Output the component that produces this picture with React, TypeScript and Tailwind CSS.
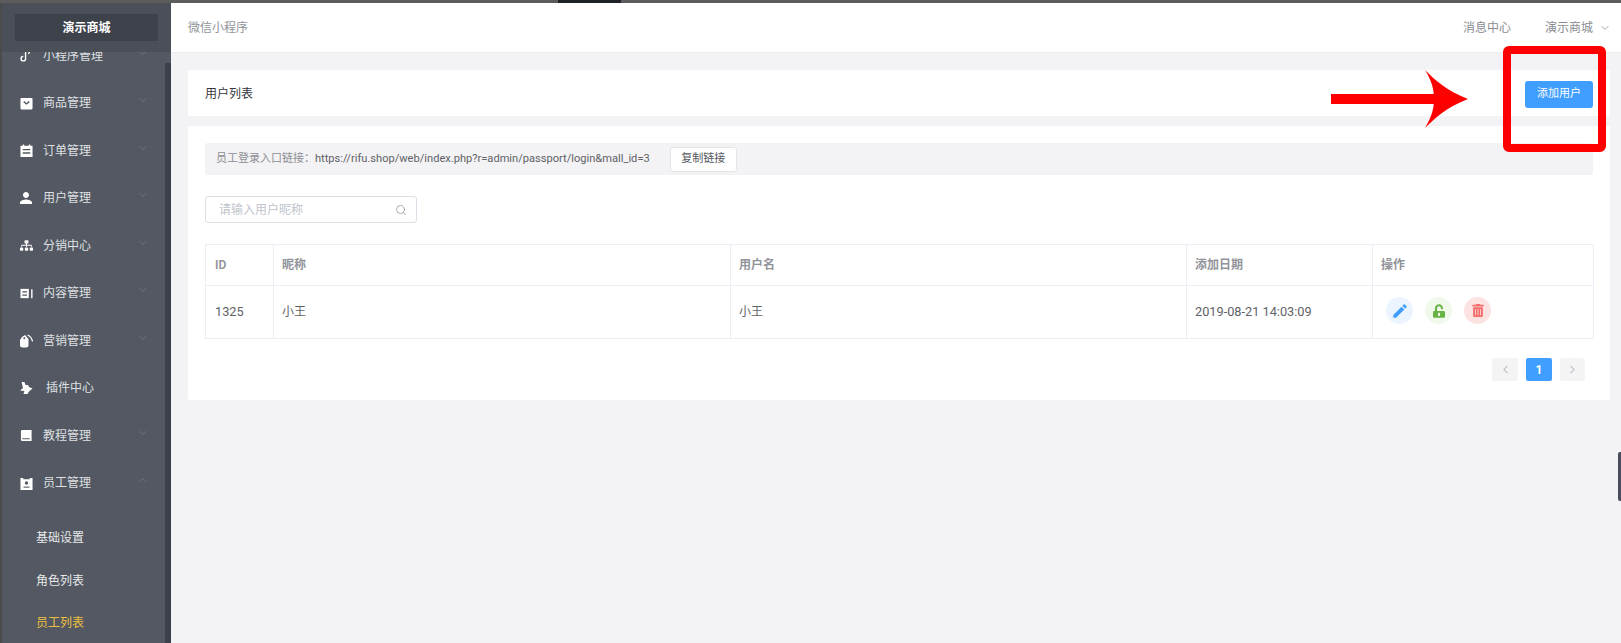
import { ChevronDown, ChevronUp, ChevronLeft, ChevronRight, Search } from 'lucide-react'
import { MdEdit, MdPerson } from 'react-icons/md'
import { FaSitemap, FaTrashAlt, FaUnlockAlt } from 'react-icons/fa'

const font = 'font-["Roboto","Noto_Sans_CJK_SC",sans-serif]'

function MiniIcon() {
  return (
    <svg viewBox="0 0 16 16" className="w-[14px] h-[14px]" fill="none" stroke="#fff" strokeWidth="1.6">
      <path d="M7.5 3v8a2.6 2.6 0 1 1-2.6-2.6" />
      <path d="M12 2.5c0 1.5-.5 2.500-1.500 3" />
    </svg>
  )
}

function BagIcon() {
  return (
    <svg viewBox="0 0 14 14" className="w-[13px] h-[13px]">
      <path fill="#fff" d="M1.500 1h11a1 1 0 0 1 1 1v10a1.500 1.500 0 0 1-1.500 1.500H2A1.500 1.500 0 0 1 .5 12V2a1 1 0 0 1 1-1z" />
      <path fill="none" stroke="#535862" strokeWidth="1.500" d="M4 5l3 2.500L10 5" />
    </svg>
  )
}

function OrderIcon() {
  return (
    <svg viewBox="0 0 14 14" className="w-[13px] h-[13px]">
      <path fill="#fff" d="M.5 2h2.500V.5h1.500V2h5V.5H11V2h2.500v12H.5z" />
      <path stroke="#535862" strokeWidth="1.400" d="M3 6h8M3 9.700h8" />
    </svg>
  )
}

function ContentIcon() {
  return (
    <svg viewBox="0 0 14 14" className="w-[13px] h-[13px]">
      <path fill="#fff" d="M.5 2h9v10h-9z" />
      <path stroke="#535862" strokeWidth="1.300" d="M2.500 5.300h5M2.500 8.700h5" />
      <path fill="#fff" d="M12 2.500h1.500v9.500H12z" />
    </svg>
  )
}

function TagIcon() {
  return (
    <svg viewBox="0 0 14 14" className="w-[14px] h-[14px]">
      <path fill="#fff" d="M3 3 6 1 9.500 5V11a2.500 2.500 0 0 1-2.500 2.500H3.500A2.500 2.500 0 0 1 1 11V6z" />
      <circle cx="5.300" cy="4.300" r="1" fill="#535862" />
      <path fill="none" stroke="#fff" strokeWidth="1.300" d="M8.500 1c2.500 1 4.500 3.500 5 6.500" />
    </svg>
  )
}

function PluginIcon() {
  return (
    <svg viewBox="0 0 14 14" className="w-[14px] h-[14px]">
      <path fill="#fff" d="M2.500 1h3l1 3H9l1 2 3.500 1.500L10 10.500 8.500 13H4.500l1-3-4.500-.5 3-2.500z" />
    </svg>
  )
}

function BookIcon() {
  return (
    <svg viewBox="0 0 14 14" className="w-[13px] h-[13px]">
      <path fill="#fff" d="M2.500 1h10v12h-10A1.500 1.500 0 0 1 1 11.500v-9A1.500 1.500 0 0 1 2.500 1z" />
      <path stroke="#535862" strokeWidth="1.100" d="M2.500 10.500h8" />
    </svg>
  )
}

function StaffIcon() {
  return (
    <svg viewBox="0 0 14 14" className="w-[13px] h-[13px]">
      <path fill="#fff" d="M.5 1h3v1.500h7V1h3v13H.5z" />
      <circle cx="7" cy="6.500" r="1.800" fill="#535862" />
      <path fill="#535862" d="M3.800 10.300h6.400v1.200H3.800z" />
    </svg>
  )
}

const menu = [
  { label: '商品管理', icon: <BagIcon /> },
  { label: '订单管理', icon: <OrderIcon /> },
  { label: '用户管理', icon: <MdPerson className="w-[18px] h-[18px] -mx-0.5 text-white" /> },
  { label: '分销中心', icon: <FaSitemap className="w-[13px] h-[13px] text-white" /> },
  { label: '内容管理', icon: <ContentIcon /> },
  { label: '营销管理', icon: <TagIcon /> },
  { label: '插件中心', icon: <PluginIcon />, plain: true },
  { label: '教程管理', icon: <BookIcon /> },
]

function MenuRow({ label, icon, plain, open }: { label: string; icon: React.ReactNode; plain?: boolean; open?: boolean }) {
  return (
    <div className="h-[47.5px] flex items-center pl-[17px] pr-[16px] text-[12px] text-[#dfe0e2]">
      <span className="w-[14px] flex justify-center shrink-0">{icon}</span>
      <span className={plain ? 'ml-[13px] flex-1' : 'ml-[10px] flex-1'}>{label}</span>
      {plain ? null : open ? (
        <ChevronUp className="w-[12px] h-[12px] text-[#6f747d] -mt-1.5" />
      ) : (
        <ChevronDown className="w-[12px] h-[12px] text-[#6f747d] -mt-1.5" />
      )}
    </div>
  )
}

function Sidebar() {
  return (
    <aside className="w-[171px] shrink-0 h-full overflow-hidden bg-[#535862] border-l-2 border-[#4b4b4b] flex">
      <div className="flex-1 min-w-0 relative">
        {/* logo header lies over the scrolled menu */}
        <div className="absolute top-0 left-0 -right-[6.5px] h-[49px] bg-[#4a4f58] pt-[11px] pl-[13px] pr-[13px] z-10">
          <div className="h-[27px] bg-[#3e424b] flex items-center justify-center text-[12px] font-semibold text-white">
            演示商城
          </div>
        </div>
        <div className="pt-[29px]">
          <MenuRow label="小程序管理" icon={<MiniIcon />} />
          {menu.map((m) => (
            <MenuRow key={m.label} label={m.label} icon={m.icon} plain={m.plain} />
          ))}
          <MenuRow label="员工管理" icon={<StaffIcon />} open />
          <div className="pt-[10px] pl-[34px] text-[12px] text-[#e8e9ea]">
            <div className="h-[42.5px] flex items-center">基础设置</div>
            <div className="h-[42.5px] flex items-center">角色列表</div>
            <div className="h-[42.5px] flex items-center text-[#f0c040]">员工列表</div>
          </div>
        </div>
      </div>
      <div className="w-[6.5px] shrink-0 mt-[60px] bg-[#3d404a]" />
    </aside>
  )
}

function Arrow() {
  return (
    <svg viewBox="0 0 140 60" className="absolute left-[1331px] top-[70px] w-[140px] h-[60px]">
      <path fill="#fe0000" d="M0 24h106V34H0z" />
      <path fill="#fe0000" d="M94 0C104 10 116 21 137 29 116 37 104 48 94 58 101 46 103 38 103 29 103 20 101 11 94 0z" />
    </svg>
  )
}

export default function App() {
  return (
    <div className={`relative w-[1621px] h-[643px] overflow-hidden bg-[#f3f2f5] ${font}`}>
      <div className="h-[3px] bg-[#5c5c5c] flex">
        <div className="w-[63px] ml-[558px] bg-[#1e2226]" />
      </div>
      <div className="flex h-[640px]">
        <Sidebar />
        <main className="flex-1 min-w-0">
          <header className="h-[50px] bg-white border-b border-[#ecebef] flex items-center pl-[17px] pr-[10px] text-[12px] text-[#909399]">
            <span className="flex-1">微信小程序</span>
            <span className="mr-[34px] text-[#8a8c91]">消息中心</span>
            <span className="text-[#8a8c91]">演示商城</span>
            <ChevronDown className="w-[12px] h-[12px] ml-[6px] text-[#a3a6ab]" />
          </header>
          <div className="pt-[17px] pl-[17px] pr-[11px]">
            <div className="h-[46px] pt-[2px] bg-white rounded-[2px] flex items-center justify-between pl-[17px] pr-[17px]">
              <span className="text-[12px] text-[#33363b]">用户列表</span>
              <button className="w-[68px] h-[27px] bg-[#409eff] rounded-[3px] text-[11px] text-white">添加用户</button>
            </div>
            <section className="mt-[10px] h-[274px] bg-white rounded-[2px] pt-[17px] px-[17px]">
              <div className="h-[32px] bg-[#f3f2f5] rounded-[3px] flex items-center pl-[11px] text-[11px] text-[#606266]">
                <span className="text-[#8d8f94]">员工登录入口链接：</span>
                <span className="text-[11.1px]">https://rifu.shop/web/index.php?r=admin/passport/login&amp;mall_id=3</span>
                <button className="ml-[20px] w-[67px] h-[25px] bg-white border border-[#e4e5e8] rounded-[3px] text-[11px] text-[#55585e]">
                  复制链接
                </button>
              </div>
              <div className="mt-[21px] w-[212px] h-[27px] border border-[#dcdfe6] rounded-[3px] flex items-center pl-[13px] pr-[9px] text-[12px] text-[#c0c4cc]">
                <span className="flex-1">请输入用户昵称</span>
                <Search className="w-[12px] h-[12px] text-[#8f9298]" strokeWidth={1.5} />
              </div>
              <table className="mt-[21px] w-[1389px] table-fixed border-collapse text-[12.75px] text-[#606266]">
                <colgroup>
                  <col className="w-[68px]" />
                  <col className="w-[457px]" />
                  <col className="w-[456px]" />
                  <col className="w-[186px]" />
                  <col />
                </colgroup>
                <thead>
                  <tr className="h-[41px] text-[12px] font-semibold text-[#909399]">
                    <th className="border border-[#ebeef5] pl-[9px] text-left font-semibold">ID</th>
                    <th className="border border-[#ebeef5] pl-[8px] text-left font-semibold">昵称</th>
                    <th className="border border-[#ebeef5] pl-[8px] text-left font-semibold">用户名</th>
                    <th className="border border-[#ebeef5] pl-[8px] text-left font-semibold">添加日期</th>
                    <th className="border border-[#ebeef5] pl-[8px] text-left font-semibold">操作</th>
                  </tr>
                </thead>
                <tbody>
                  <tr className="h-[53px]">
                    <td className="border border-[#ebeef5] pl-[9px]">1325</td>
                    <td className="border border-[#ebeef5] pl-[8px] text-[12px]">小王</td>
                    <td className="border border-[#ebeef5] pl-[8px] text-[12px]">小王</td>
                    <td className="border border-[#ebeef5] pl-[8px]">2019-08-21 14:03:09</td>
                    <td className="border border-[#ebeef5] pl-[13px]">
                      <div className="flex gap-[12px] -mt-[3px]">
                        <span className="w-[27px] h-[27px] rounded-full bg-[#ecf5ff] flex items-center justify-center">
                          <MdEdit className="w-[18px] h-[18px] text-[#409eff]" />
                        </span>
                        <span className="w-[27px] h-[27px] rounded-full bg-[#f0f9eb] flex items-center justify-center">
                          <FaUnlockAlt className="w-[12px] h-[14px] text-[#67b346]" />
                        </span>
                        <span className="w-[27px] h-[27px] rounded-full bg-[#fde2e2] flex items-center justify-center">
                          <FaTrashAlt className="w-[12px] h-[13px] text-[#f56c6c]" />
                        </span>
                      </div>
                    </td>
                  </tr>
                </tbody>
              </table>
              <div className="mt-[19px] pr-[8px] flex justify-end gap-[8px]">
                <span className="w-[26px] h-[23px] bg-[#f4f4f5] rounded-[2px] flex items-center justify-center">
                  <ChevronLeft className="w-[13px] h-[13px] text-[#c0c4cc]" />
                </span>
                <span className="w-[26px] h-[23px] bg-[#409eff] rounded-[2px] flex items-center justify-center text-[12px] font-bold text-white">
                  1
                </span>
                <span className="w-[25px] h-[23px] bg-[#f4f4f5] rounded-[2px] flex items-center justify-center">
                  <ChevronRight className="w-[13px] h-[13px] text-[#c0c4cc]" />
                </span>
              </div>
            </section>
          </div>
        </main>
      </div>
      {/* annotation painted on the screenshot */}
      <Arrow />
      <div className="absolute left-[1503px] top-[46px] w-[103px] h-[106px] border-[8px] border-[#fe0000] rounded-[6px]" />
      <div className="absolute right-0 top-[452px] w-[3px] h-[49px] bg-[#4a4e5c] rounded-l-[2px]" />
    </div>
  )
}
